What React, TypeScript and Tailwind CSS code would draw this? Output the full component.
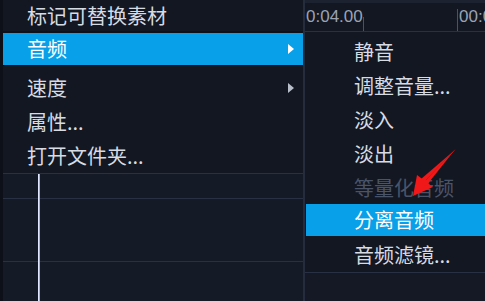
import React from 'react';

const font = { fontFamily: '"Noto Sans CJK SC", "Noto Sans", sans-serif' };
const mono = { fontFamily: '"Liberation Sans", sans-serif' };

const Caret = ({ className }: { className: string }) => (
  <svg width="6" height="10" viewBox="0 0 6 10" className={className}>
    <path d="M0 0 L6 5 L0 10 Z" fill="currentColor" />
  </svg>
);

const MenuRow = ({
  label,
  h,
  active,
  disabled,
  caret,
  pad,
}: {
  label: string;
  h: string;
  active?: boolean;
  disabled?: boolean;
  caret?: boolean;
  pad: string;
}) => (
  <div
    className={`flex items-center justify-between ${h} ${pad} text-[20px] leading-none ${
      active ? 'bg-[#08a0e9] text-white' : disabled ? 'text-[#4a5468]' : 'text-[#d6dbe4]'
    }`}
  >
    <span>{label}</span>
    {caret && <Caret className={`mr-[9px] ${active ? 'text-white' : 'text-[#b8bfcb]'}`} />}
  </div>
);

export default function App() {
  return (
    <div className="relative flex w-[485px] h-[301px] overflow-hidden bg-[#131722]" style={font}>
      {/* left: main context menu + timeline */}
      <div className="flex flex-col w-[303px] border-l-[3px] border-[#0d1018]">
        <div className="bg-[#131722]">
          <MenuRow label="标记可替换素材" h="h-[31px]" pad="pl-[24px]" />
          <div className="h-[2px] bg-[#0e111a]" />
          <MenuRow label="音频" h="h-[32px]" pad="pl-[24px]" active caret />
          <div className="h-[6px] border-t border-[#0e111a]" />
          <MenuRow label="速度" h="h-[34px]" pad="pl-[24px]" caret />
          <MenuRow label="属性..." h="h-[34px]" pad="pl-[24px]" />
          <MenuRow label="打开文件夹..." h="h-[34px]" pad="pl-[24px]" />
        </div>
        <div className="relative flex-1 flex flex-col border-t border-[#283043] bg-[#151a27]">
          <div className="h-[25px] border-b border-[#283043]" />
          <div className="h-[63px] border-b border-[#283043]" />
          <div className="flex-1" />
          <div className="absolute left-[35px] top-0 bottom-0 w-[2px] bg-[#8fb3ff] border-l border-[#dfe8ff]" />
        </div>
      </div>

      {/* right: ruler + submenu */}
      <div className="flex flex-col flex-1 border-l-[2px] border-[#242c3e]">
        <div className="relative h-[32px] overflow-hidden bg-[#131722] border-b border-[#283043]">
          <div className="h-[3px] bg-[#1c2230]" />
          <div className="absolute left-[1px] top-[8px] text-[17px] leading-none text-[#9aa3b4]" style={mono}>
            0:04.00
          </div>
          <div className="absolute left-[58px] top-[17px] w-px h-[15px] bg-[#4a5366]" />
          <div className="absolute left-[152px] top-[9px] w-px h-[23px] bg-[#4a5366]" />
          <div className="absolute left-[154px] top-[8px] w-[26px] overflow-hidden whitespace-nowrap text-[17px] leading-none text-[#9aa3b4]" style={mono}>
            00:0
          </div>
        </div>
        <div className="flex flex-col pl-[1px] pt-[3px] h-[241px] border-b border-[#283043] bg-[#131722]">
          <MenuRow label="静音" h="h-[34px]" pad="pl-[48px]" />
          <MenuRow label="调整音量..." h="h-[34px]" pad="pl-[48px]" />
          <MenuRow label="淡入" h="h-[34px]" pad="pl-[48px]" />
          <MenuRow label="淡出" h="h-[34px]" pad="pl-[48px]" />
          <MenuRow label="等量化音频" h="h-[33px]" pad="pl-[48px]" disabled />
          <MenuRow label="分离音频" h="h-[32px]" pad="pl-[48px]" active />
          <div className="h-[2px]" />
          <MenuRow label="音频滤镜..." h="h-[34px]" pad="pl-[48px]" />
        </div>
        <div className="flex-1 bg-[#141925]" />
      </div>

      {/* red annotation arrow */}
      <svg className="absolute left-0 top-0 pointer-events-none" width="485" height="301" viewBox="0 0 485 301">
        <path d="M456 149 L424 182 L421 179 Z" fill="#f01818" />
        <path d="M413 196 L417 175 L433 187 Z" fill="#f01818" />
        <path d="M455.5 149 L422 184 L426 186 Z" fill="#f01818" />
      </svg>
    </div>
  );
}
